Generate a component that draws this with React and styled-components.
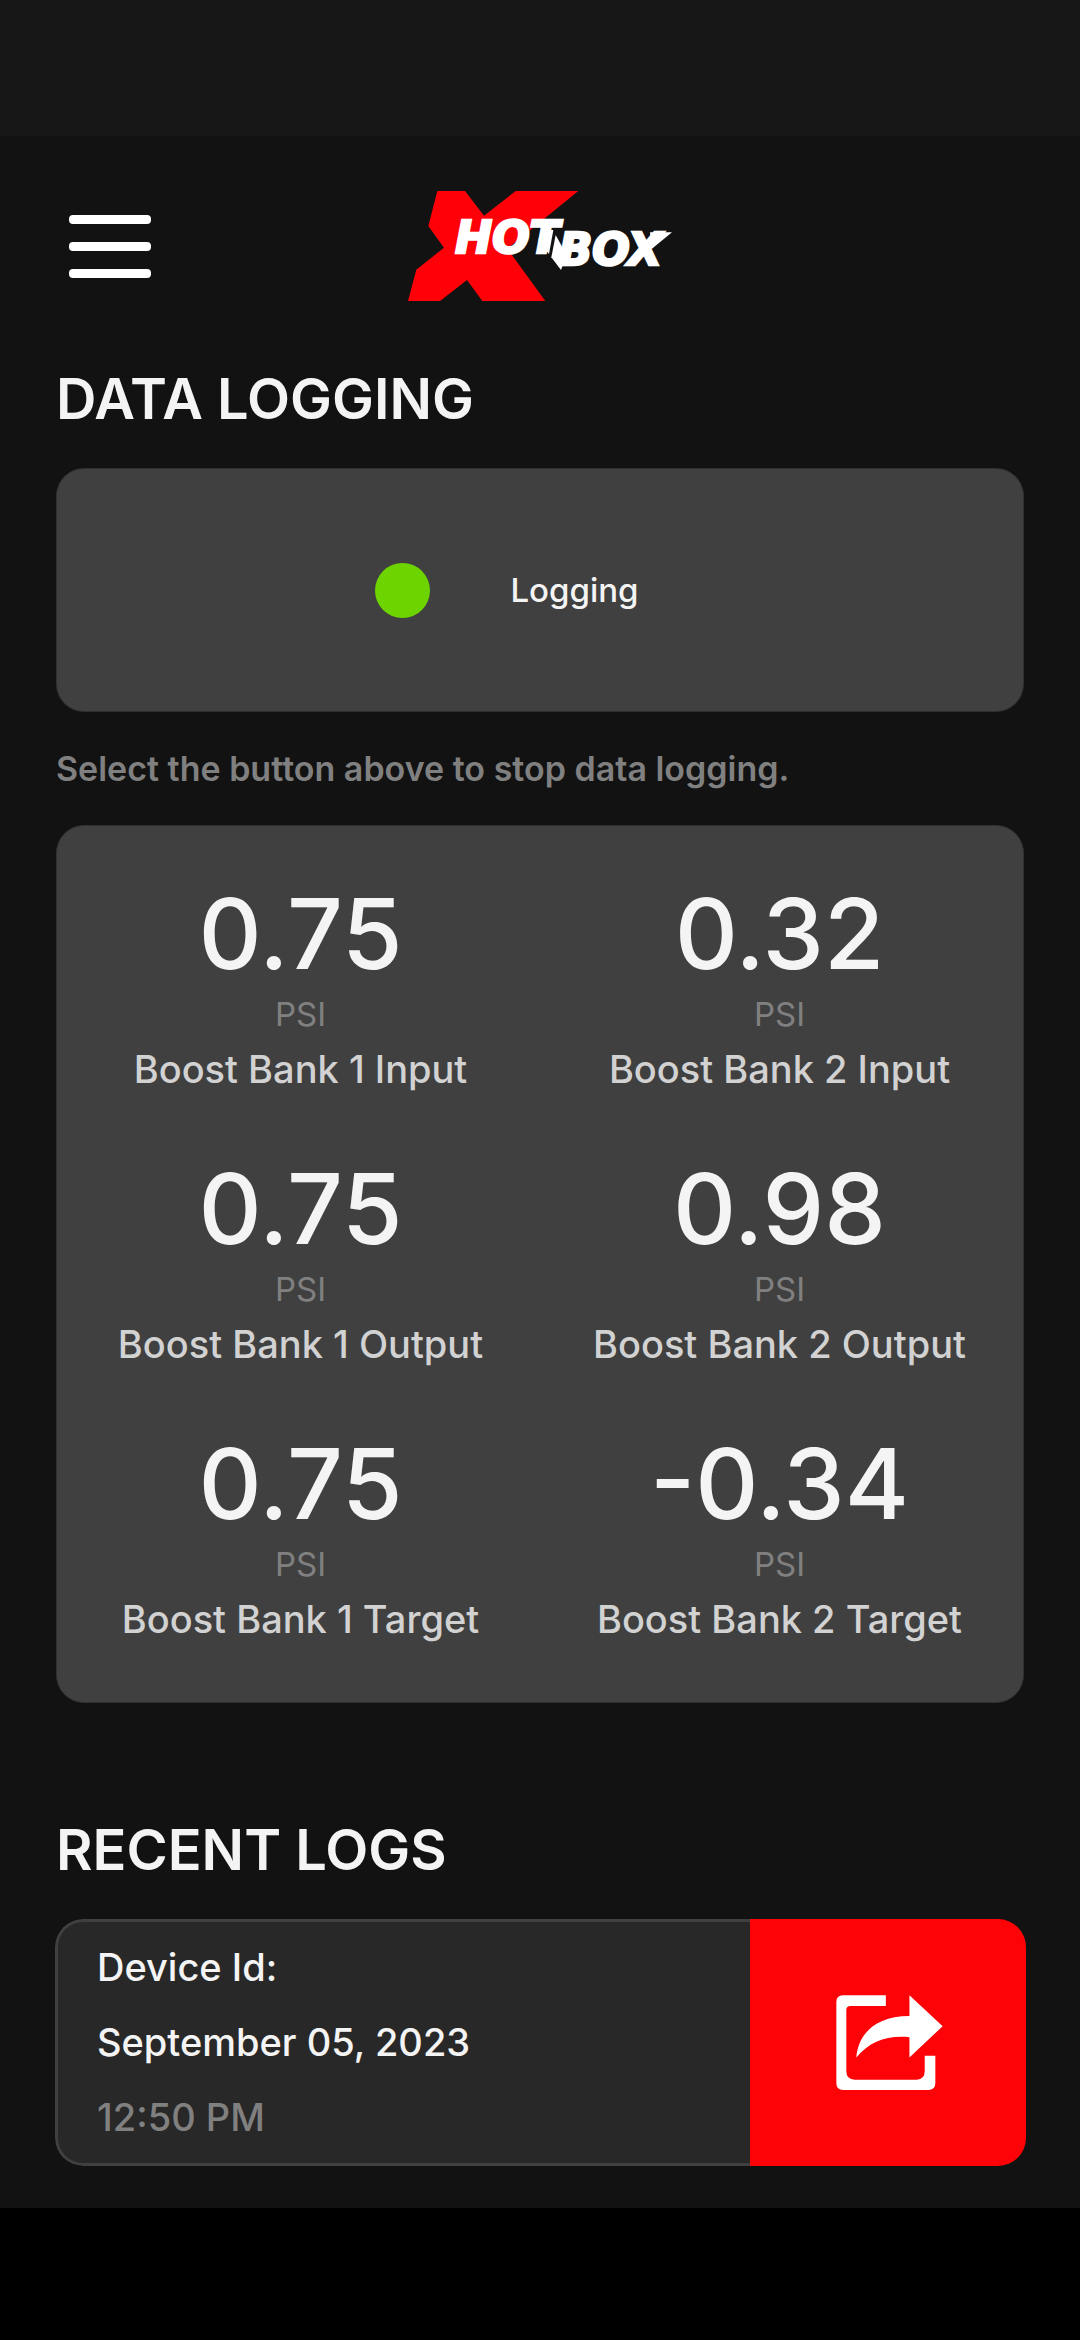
import React, { useState } from "react"
import styled, { createGlobalStyle } from "styled-components"

const GlobalStyle = createGlobalStyle`
  * {
    box-sizing: border-box;
  }

  body {
    margin: 0;
    background: #000000;
    color: #f4f4f4;
    font-family: Inter, "Liberation Sans", sans-serif;
    font-weight: 500;
  }

  button {
    font: inherit;
    color: inherit;
    border: 0;
    padding: 0;
    background: none;
    cursor: pointer;
  }
`

const Screen = styled.div`
  min-height: 100vh;
`

const StatusStrip = styled.div`
  height: 136px;
  background: #171717;
`

const Content = styled.main`
  padding: 0 56px 42px;
  background: #121212;
`

const Header = styled.header`
  display: grid;
  grid-template-columns: 1fr auto 1fr;
  align-items: center;
  padding: 55px 0 65px;
`

const MenuButton = styled.button`
  && {
    display: flex;
    flex-direction: column;
    justify-self: start;
    gap: 18px;
    padding: 13px;
  }
`

const MenuBar = styled.span`
  width: 82px;
  height: 9px;
  border-radius: 4px;
  background: #ffffff;
`

const LogoSvg = styled.svg`
  display: block;
  width: 264px;
  height: 110px;
  overflow: visible;
`

const LogoText = styled.text`
  font-family: "DejaVu Sans", sans-serif;
  font-size: 132px;
  font-weight: 700;
  font-style: italic;
  fill: #ffffff;
  stroke: #ffffff;
  stroke-width: 8px;
`

const Title = styled.h2`
  margin: 0 0 37px;
  padding-top: 1px;
  font-size: 56px;
  font-weight: 600;
  line-height: 64px;
`

const RecentTitle = styled(Title)`
  margin: 114px 0 37px;
`

const LoggingButton = styled.button`
  && {
    display: flex;
    align-items: center;
    justify-content: center;
    gap: 80px;
    width: 100%;
    height: 244px;
    padding-right: 66px;
    border: 1px solid #303030;
    border-radius: 28px;
    background: #404040;
    font-size: 33px;
    line-height: 40px;
  }
`

const StatusDot = styled.span`
  width: 55px;
  height: 55px;
  border-radius: 50%;
  background: ${({ $on }) => ($on ? "#6dd400" : "#808080")};
`

const Hint = styled.p`
  margin: 37px 0 36px;
  color: #808080;
  font-size: 34px;
  font-weight: 600;
  line-height: 40px;
`

const Readings = styled.section`
  display: grid;
  grid-template-columns: 1fr 1fr;
  row-gap: 70px;
  padding: 60px 4px 61px;
  border: 1px solid #303030;
  border-radius: 28px;
  background: #404040;
  text-align: center;
`

const Value = styled.div`
  font-size: 98px;
  line-height: 96px;
`

const Unit = styled.div`
  margin: 12px 0 13px;
  color: #808080;
  font-size: 33px;
  font-weight: 400;
  line-height: 40px;
`

const Label = styled.div`
  color: #d2d2d2;
  font-size: 38px;
  line-height: 44px;
`

const LogCard = styled.article`
  display: flex;
  overflow: hidden;
  margin: 0 -2px 0 -1px;
  border-radius: 28px;
`

const LogInfo = styled.div`
  flex: 1;
  padding: 8px 39px;
  border: 3px solid #404040;
  border-right: 0;
  border-radius: 28px 0 0 28px;
  background: #282828;
`

const LogLine = styled.div`
  color: ${({ $muted }) => ($muted ? "#808080" : "#f4f4f4")};
  font-size: 38px;
  line-height: 75px;
`

const ShareButton = styled.button`
  && {
    display: flex;
    align-items: center;
    justify-content: center;
    width: 276px;
    padding-left: 3px;
    background: #fd0307;
  }
`

const readings = [
  { label: "Boost Bank 1 Input", value: "0.75" },
  { label: "Boost Bank 2 Input", value: "0.32" },
  { label: "Boost Bank 1 Output", value: "0.75" },
  { label: "Boost Bank 2 Output", value: "0.98" },
  { label: "Boost Bank 1 Target", value: "0.75" },
  { label: "Boost Bank 2 Target", value: "-0.34" },
]

const Logo = () => (
  <LogoSvg viewBox="54 63 792 330" role="img" aria-label="HotBox">
    <polygon
      fill="#ff0009"
      points="142,63 225,63 282,137 377,63 565,63 352,236 466,393 277,393 231,330 150,393 54,393 79,299 162,233 115,168"
    />
    <LogoText x="196" y="249">
      HOT
    </LogoText>
    <LogoText x="506" y="285">
      BOX
    </LogoText>
    {/* lightning tails under the T and the B, and the long arm of the X */}
    <polygon fill="#ffffff" points="458,180 445,210 477,252 490,180" />
    <polygon fill="#ffffff" points="497,195 484,262 513,300 530,255" />
    <polygon fill="#ffffff" points="780,187 846,187 784,238" />
  </LogoSvg>
)

const ShareIcon = () => (
  <svg width="107" height="95" viewBox="348 313 320 286" aria-hidden="true">
    <path
      fill="#ffffff"
      d="M497 314H368Q348 314 348 334V579Q348 599 368 599H625Q646 599 646 579V496H614V542Q614 568 590 568H403Q378 568 378 542V358Q378 346 391 346H497Z"
    />
    <path
      fill="#ffffff"
      d="M568 314L668 407L568 501V440C500 434 450 452 408 501C414 430 465 376 568 376Z"
    />
  </svg>
)

const App = () => {
  const [logging, setLogging] = useState(true)

  return (
    <Screen>
      <GlobalStyle />
      <StatusStrip />
      <Content>
        <Header>
          <MenuButton aria-label="Menu">
            <MenuBar />
            <MenuBar />
            <MenuBar />
          </MenuButton>
          <Logo />
        </Header>

        <Title>DATA LOGGING</Title>
        <LoggingButton onClick={() => setLogging(!logging)}>
          <StatusDot $on={logging} />
          {logging ? "Logging" : "Stopped"}
        </LoggingButton>
        <Hint>
          Select the button above to {logging ? "stop" : "start"} data logging.
        </Hint>

        <Readings>
          {readings.map(({ label, value }) => (
            <div key={label}>
              <Value>{value}</Value>
              <Unit>PSI</Unit>
              <Label>{label}</Label>
            </div>
          ))}
        </Readings>

        <RecentTitle>RECENT LOGS</RecentTitle>
        <LogCard>
          <LogInfo>
            <LogLine>Device Id:</LogLine>
            <LogLine>September 05, 2023</LogLine>
            <LogLine $muted>12:50 PM</LogLine>
          </LogInfo>
          <ShareButton aria-label="Share log">
            <ShareIcon />
          </ShareButton>
        </LogCard>
      </Content>
    </Screen>
  )
}

export default App
